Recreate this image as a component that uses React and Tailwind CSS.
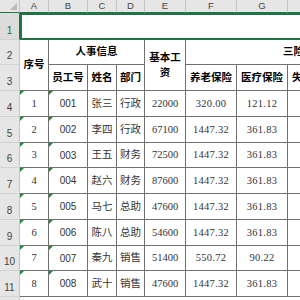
import React from 'react';

const rows = [
  ['1', '001', '张三', '行政', '22000', '320.00', '121.12'],
  ['2', '002', '李四', '行政', '67100', '1447.32', '361.83'],
  ['3', '003', '王五', '财务', '72500', '1447.32', '361.83'],
  ['4', '004', '赵六', '财务', '87600', '1447.32', '361.83'],
  ['5', '005', '马七', '总助', '47600', '1447.32', '361.83'],
  ['6', '006', '陈八', '总助', '54600', '1447.32', '361.83'],
  ['7', '007', '秦九', '销售', '51400', '550.72', '90.22'],
  ['8', '008', '武十', '销售', '47600', '1447.32', '361.83'],
];

const letters = ['A', 'B', 'C', 'D', 'E', 'F', 'G', 'H', 'I'];

const cell = 'flex items-center justify-center border-r border-b border-[#707070] bg-white';
const head = 'flex items-center justify-center border-r border-b border-[#707070] bg-white font-bold text-black text-[10.5px]';
const rowHead = 'flex items-end justify-center pb-[1px] bg-[#e6e6e6] border-r border-b border-r-[#c4c4c4] border-b-[#d2d2d2] text-[10px] text-[#444] font-["Liberation_Sans",sans-serif]';

const Flag = () => (
  <span className="absolute top-0 left-0 w-0 h-0 border-t-[4px] border-r-[4px] border-t-[#1b8a3a] border-r-transparent" />
);

const App = () => {
  return (
    <div className="w-[300px] h-[300px] overflow-hidden bg-white">
      <div className="grid w-[390px] grid-cols-[20px_29px_39px_29px_28px_41px_51px_51px_51px_51px] grid-rows-[13px_27px_25px_26px_26px_26px_25px_26px_26px_26px_25px_26px_26px] font-['Liberation_Serif','Noto_Sans_CJK_SC',serif] text-[#333]">
        {/* column headers */}
        <div className="relative bg-[#e6e6e6] border-r border-b border-r-[#c4c4c4] border-b-[#217346]">
          <span className="absolute right-[2px] bottom-[2px] w-0 h-0 border-b-[7px] border-l-[7px] border-b-[#b8b8b8] border-l-transparent" />
        </div>
        {letters.map((l) => (
          <div
            key={l}
            className="flex items-center justify-center bg-[#e6e6e6] border-r border-b border-r-[#c4c4c4] border-b-[#217346] text-[9.5px] text-[#444] font-['Liberation_Sans',sans-serif]"
          >
            {l}
          </div>
        ))}

        {/* row 1 */}
        <div className="flex items-end justify-center pb-[1px] bg-[#dcdcdc] border-r border-b border-r-[#217346] border-b-[#d2d2d2] text-[10px] text-[#217346] font-['Liberation_Sans',sans-serif]">
          1
        </div>
        <div className="col-span-9 bg-white border-2 border-r-0 border-[#217346]" />

        {/* row 2 */}
        <div className={rowHead}>2</div>
        <div className={`${head} row-span-2`}>序号</div>
        <div className={`${head} col-span-3`}>人事信息</div>
        <div className={`${head} row-span-2 leading-[15px] text-center`}>
          基本工
          <br />资
        </div>
        <div className="col-span-4 flex items-center pl-[97px] border-b border-[#707070] bg-white font-bold text-black text-[10.5px]">
          三险一金
        </div>

        {/* row 3 */}
        <div className={rowHead}>3</div>
        <div className={head}>员工号</div>
        <div className={head}>姓名</div>
        <div className={head}>部门</div>
        <div className={head}>养老保险</div>
        <div className={head}>医疗保险</div>
        <div className={head}>失业保险</div>
        <div className={head}>工伤保险</div>

        {rows.map((r, i) => (
          <React.Fragment key={r[0]}>
            <div className={rowHead}>{i + 4}</div>
            <div className={`${cell} relative text-[10.5px]`}>
              <Flag />
              {r[0]}
            </div>
            <div className={`${cell} relative text-[10px] font-['Liberation_Sans',sans-serif]`}>
              <Flag />
              {r[1]}
            </div>
            <div className={`${cell} text-[10.5px]`}>{r[2]}</div>
            <div className={`${cell} text-[10.5px]`}>{r[3]}</div>
            <div className={`${cell} text-[10.5px]`}>{r[4]}</div>
            <div className={`${cell} text-[10.5px] tracking-[0.3px]`}>{r[5]}</div>
            <div className={`${cell} text-[10.5px] tracking-[0.3px]`}>{r[6]}</div>
            <div className={cell} />
            <div className={cell} />
          </React.Fragment>
        ))}

        {/* row 12 (cut off) */}
        <div className={rowHead}>12</div>
        <div className="col-span-9 bg-white" />
      </div>
    </div>
  );
};

export default App;
